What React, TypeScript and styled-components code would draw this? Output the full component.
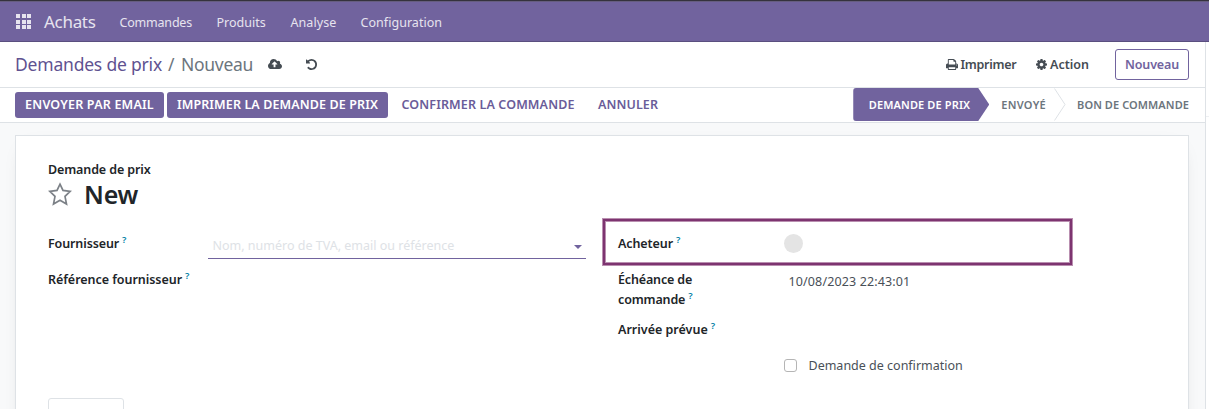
import React from "react";
import styled, { createGlobalStyle } from "styled-components";

const purple = "#71639e";

const GlobalStyle = createGlobalStyle`
  *, *::before, *::after { box-sizing: border-box; }
  body {
    margin: 0;
    overflow: hidden;
    background: #fff;
    color: #495057;
    font: 400 12.5px/20px "Noto Sans", "Open Sans", sans-serif;
  }
  button { font: inherit; color: inherit; border: 0; background: none; padding: 0; margin: 0; white-space: nowrap; }
`;

const Page = styled.div`
  height: 409px;
  display: flex;
  flex-direction: column;
  overflow: hidden;
`;

const Navbar = styled.nav`
  height: 42px;
  flex: none;
  display: flex;
  align-items: center;
  padding: 3px 0 0 16px;
  background: ${purple};
  border-top: 1px solid #35323d;
  border-bottom: 1px solid #5a4f7f;
  box-shadow: inset 0 1px 0 #665d80;
  color: #e7e4ef;
`;

const Apps = styled.div`
  display: grid;
  grid-template-columns: repeat(3, 4px);
  grid-auto-rows: 4px;
  gap: 1.5px;
  width: 15px;
  margin: 0 13px 2px 0;
  span { background: #e7e4ef; }
`;

const Brand = styled.span`
  width: 75.5px;
  padding-bottom: 2px;
  font-size: 17px;
  letter-spacing: -0.3px;
`;

const MenuItem = styled.a<{ $width: number; $track?: number }>`
  width: ${(p) => p.$width}px;
  letter-spacing: ${(p) => p.$track ?? 0}px;
  white-space: nowrap;
`;

const Columns = styled.div`
  flex: 1;
  min-height: 0;
  display: flex;
`;

const Main = styled.main`
  width: 1206px;
  display: flex;
  flex-direction: column;
  border-right: 1px solid #dee2e6;
`;

const Chatter = styled.aside`
  flex: 1;
  display: flex;
  flex-direction: column;
`;

const ChatterTop = styled.div`
  height: 75px;
  border-bottom: 1px solid #eef0f2;
`;

const ControlPanel = styled.header`
  height: 46px;
  flex: none;
  display: flex;
  align-items: center;
  padding: 0 16px 0 15px;
  border-bottom: 1px solid #dee2e6;
`;

const Breadcrumb = styled.div`
  display: flex;
  padding-bottom: 2px;
  font-size: 17.5px;
  line-height: 26px;
  white-space: nowrap;
  color: #6c757d;
`;

const Crumb = styled.span<{ $width: number; $link?: boolean; $track?: number }>`
  width: ${(p) => p.$width}px;
  letter-spacing: ${(p) => p.$track ?? 0}px;
  color: ${(p) => (p.$link ? "#5f5291" : "#6c757d")};
`;

const IconButton = styled.button<{ $width: number }>`
  width: ${(p) => p.$width}px;
  display: flex;
  align-items: center;
`;

const Spacer = styled.div`
  flex: 1;
`;

const PanelAction = styled.button<{ $width: number; $track?: number }>`
  width: ${(p) => p.$width}px;
  display: flex;
  align-items: center;
  gap: 3px;
  font-weight: 600;
  color: #454c53;
  letter-spacing: ${(p) => p.$track ?? 0}px;
`;

const OutlineButton = styled.button`
  width: 74px;
  height: 31px;
  border: 1px solid ${purple};
  border-radius: 3px;
  font-weight: 600;
  letter-spacing: -0.12px;
  color: ${purple};
`;

const StatusRow = styled.div`
  height: 35px;
  flex: none;
  display: flex;
  align-items: center;
  padding: 0 16px 0 15px;
  border-bottom: 1px solid #dee2e6;
`;

const StatusButton = styled.button<{ $width: number; $primary?: boolean; $track?: number }>`
  width: ${(p) => p.$width}px;
  height: 26px;
  margin-right: 3px;
  border-radius: 3px;
  font-weight: 600;
  text-align: center;
  letter-spacing: ${(p) => p.$track ?? 0}px;
  background: ${(p) => (p.$primary ? purple : "transparent")};
  color: ${(p) => (p.$primary ? "#fff" : "#6a5c99")};
`;

const Steps = styled.div`
  display: flex;
  align-self: flex-start;
  height: 33px;
  font-size: 11px;
  font-weight: 600;
  line-height: 33px;
  white-space: nowrap;
`;

const ActiveStep = styled.div`
  width: 136px;
  height: 33px;
  padding-left: 15.5px;
  border-radius: 3px;
  letter-spacing: 0.13px;
  color: #fff;
  background: ${purple};
  clip-path: polygon(0 0, 125px 0, 136px 50%, 125px 100%, 0 100%);
`;

const Step = styled.div<{ $track: number }>`
  letter-spacing: ${(p) => p.$track}px;
  color: #6c757d;
  margin-left: 12px;
`;

const Chevron = styled.svg`
  width: 12px;
  height: 33px;
  margin-left: 8px;
  margin-right: -1px;
`;

const Content = styled.div`
  flex: 1;
  min-height: 0;
  padding: 12px 16px 0 15px;
  background: #f8f9fa;
`;

const Sheet = styled.section`
  height: 320px;
  display: flex;
  flex-direction: column;
  padding: 24px 32px 0 32px;
  background: #fff;
  border: 1px solid #dee2e6;
  box-shadow: 0 5px 20px -15px rgba(0, 0, 0, 0.4);
`;

const Caption = styled.div`
  height: 20px;
  font-weight: 600;
  letter-spacing: -0.12px;
  color: #212529;
`;

const Title = styled.h1`
  height: 31px;
  margin: 0;
  padding-bottom: 3px;
  display: flex;
  align-items: center;
  gap: 12px;
  font-size: 25px;
  font-weight: 600;
  line-height: 28px;
  letter-spacing: -0.2px;
  color: #212529;
`;

const Groups = styled.div`
  display: grid;
  grid-template-columns: 538px 1fr;
  column-gap: 32px;
  height: 187px;
`;

const Group = styled.div`
  display: flex;
  flex-direction: column;
  padding-top: 23px;
`;

const Row = styled.div<{ $height: number; $label: number }>`
  height: ${(p) => p.$height}px;
  position: relative;
  display: grid;
  grid-template-columns: ${(p) => p.$label}px 1fr;
`;

const Label = styled.label<{ $track?: number }>`
  font-weight: 600;
  letter-spacing: ${(p) => p.$track ?? 0}px;
  color: #212529;
`;

const Help = styled.sup`
  margin-left: 3px;
  font-size: 9.5px;
  font-weight: 600;
  line-height: 0;
  vertical-align: 5px;
  letter-spacing: 0;
  color: #0180a5;
`;

const Combo = styled.div`
  width: 378px;
  height: 25px;
  display: flex;
  align-items: center;
  justify-content: space-between;
  padding: 0 4px 1px 4.5px;
  border-bottom: 1px solid ${purple};
  color: #dee2e6;
`;

const Caret = styled.span`
  margin-top: 2px;
  border: 4px solid transparent;
  border-top-color: ${purple};
  border-bottom: 0;
`;

const Avatar = styled.span`
  width: 19px;
  height: 19px;
  border-radius: 50%;
  background: #e4e4e4;
`;

const Value = styled.div`
  padding: 2px 0 0 4.5px;
  letter-spacing: 0.13px;
`;

const CheckField = styled.div`
  display: flex;
  align-items: flex-start;
  gap: 11.5px;
`;

const CheckBox = styled.span`
  width: 13px;
  height: 13px;
  margin-top: 3px;
  border: 1px solid #b5b5b5;
  border-radius: 3px;
`;

const Highlight = styled.div`
  position: absolute;
  left: -16px;
  top: -16px;
  width: 471px;
  height: 48px;
  border: 4px solid #b98fb0;
  &::after {
    content: "";
    position: absolute;
    inset: -3px;
    border: 2px solid #7d3470;
  }
`;

const Tab = styled.div`
  width: 76px;
  height: 30px;
  flex: none;
  border: 1px solid #dee2e6;
  border-radius: 3px 3px 0 0;
`;

const glyphs = {
  upload: "M1280 864q0-14-9-23l-352-352q-9-9-23-9t-23 9l-351 351q-10 12-10 24 0 14 9 23t23 9h224v352q0 13 9.5 22.5t22.5 9.5h192q13 0 22.5-9.5t9.5-22.5v-352h224q13 0 22.5-9.5t9.5-22.5zm640 288q0 159-112.5 271.5t-271.5 112.5h-1088q-185 0-316.5-131.5t-131.5-316.5q0-130 70-240t188-165q-2-30-2-43 0-212 150-362t362-150q156 0 285.5 87t188.5 231q71-62 166-62 106 0 181 75t75 181q0 76-41 138 130 31 213.5 135.5t83.5 238.5z",
  undo: "M1664 896q0 156-61 298t-164 245-245 164-298 61q-172 0-327-72.5t-264-204.5q-7-10-6.5-22.5t8.5-20.5l137-138q10-9 25-9 16 2 23 12 73 95 179 147t225 52q104 0 198.5-40.5t163.5-109.5 109.5-163.5 40.5-198.5-40.5-198.5-109.5-163.5-163.5-109.5-198.5-40.5q-98 0-188 35.5t-160 101.5l137 138q31 30 14 69-17 40-59 40h-448q-26 0-45-19t-19-45v-448q0-42 40-59 39-17 69 14l130 129q107-101 244.5-156.5t284.5-55.5q156 0 298 61t245 164 164 245 61 298z",
  print: "M448 1536h896v-256h-896v256zm0-640h896v-384h-160q-40 0-68-28t-28-68v-160h-640v640zm1152 64q0-26-19-45t-45-19-45 19-19 45 19 45 45 19 45-19 19-45zm128 0v416q0 13-9.5 22.5t-22.5 9.5h-224v160q0 40-28 68t-68 28h-960q-40 0-68-28t-28-68v-160h-224q-13 0-22.5-9.5t-9.5-22.5v-416q0-79 56.5-135.5t135.5-56.5h64v-544q0-40 28-68t68-28h672q40 0 88 20t76 48l152 152q28 28 48 76t20 88v256h64q79 0 135.5 56.5t56.5 135.5z",
  cog: "M1152 896q0-106-75-181t-181-75-181 75-75 181 75 181 181 75 181-75 75-181zm512-109v222q0 12-8 23t-20 13l-185 28q-19 54-39 91 35 50 107 138 10 12 10 25t-9 23q-27 37-99 108t-94 71q-12 0-26-9l-138-108q-44 23-91 38-16 136-29 186-7 28-36 28h-222q-14 0-24.5-8.5t-11.5-21.5l-28-184q-49-16-90-37l-141 107q-10 9-25 9-14 0-25-11-126-114-165-168-7-10-7-23 0-12 8-23 15-21 51-66.5t54-70.5q-27-50-41-99l-183-27q-13-2-21-12.5t-8-23.5v-222q0-12 8-23t19-13l186-28q14-46 39-92-40-57-107-138-10-12-10-24 0-10 9-23 26-36 98.5-107.5t94.5-71.5q13 0 26 10l138 107q44-23 91-38 16-136 29-186 7-28 36-28h222q14 0 24.5 8.5t11.5 21.5l28 184q49 16 90 37l142-107q9-9 24-9 13 0 25 10 129 119 165 170 7 8 7 22 0 12-8 23-15 21-51 66.5t-54 70.5q26 50 41 98l183 28q13 2 21 12.5t8 23.5z",
};

const boxes = {
  upload: "0 128 1920 1536",
  undo: "128 128 1536 1536",
  print: "64 128 1664 1536",
  cog: "128 128 1536 1536",
};

function Glyph({ name, w, h }: { name: keyof typeof glyphs; w: number; h: number }) {
  return (
    <svg width={w} height={h} viewBox={boxes[name]} preserveAspectRatio="none" fill="#454c53" aria-hidden="true">
      <path d={glyphs[name]} />
    </svg>
  );
}

function Star() {
  return (
    <svg width="24" height="24" viewBox="0 0 24 24" fill="none" stroke="#7c8187" strokeWidth="1.7" aria-hidden="true">
      <path d="M12 2.2L15 8.4L22.2 9.3L17 14.3L18.5 22L12 18.2L5.5 22L7 14.3L1.8 9.3L9 8.4Z" />
    </svg>
  );
}

export default function App() {
  return (
    <Page>
      <GlobalStyle />
      <Navbar>
        <Apps>
          {Array.from({ length: 9 }, (_, i) => (
            <span key={i} />
          ))}
        </Apps>
        <Brand>Achats</Brand>
        <MenuItem $width={97} $track={-0.2}>Commandes</MenuItem>
        <MenuItem $width={74}>Produits</MenuItem>
        <MenuItem $width={70} $track={0.08}>Analyse</MenuItem>
        <MenuItem $width={90} $track={0.04}>Configuration</MenuItem>
      </Navbar>
      <Columns>
        <Main>
          <ControlPanel>
            <Breadcrumb>
              <Crumb $width={153} $link $track={-0.2}>Demandes de prix</Crumb>
              <Crumb $width={13}>/</Crumb>
              <Crumb $width={87} $track={-0.28}>Nouveau</Crumb>
            </Breadcrumb>
            <IconButton $width={38} aria-label="Enregistrer">
              <Glyph name="upload" w={14} h={11} />
            </IconButton>
            <IconButton $width={14} aria-label="Annuler">
              <Glyph name="undo" w={11} h={11} />
            </IconButton>
            <Spacer />
            <PanelAction $width={90.5} $track={-0.28}>
              <Glyph name="print" w={12} h={11} />
              Imprimer
            </PanelAction>
            <PanelAction $width={79}>
              <Glyph name="cog" w={11} h={11} />
              Action
            </PanelAction>
            <OutlineButton>Nouveau</OutlineButton>
          </ControlPanel>
          <StatusRow>
            <StatusButton $primary $width={149} $track={0.2}>ENVOYER PAR EMAIL</StatusButton>
            <StatusButton $primary $width={221} $track={0.11}>IMPRIMER LA DEMANDE DE PRIX</StatusButton>
            <StatusButton $width={194} $track={0.13}>CONFIRMER LA COMMANDE</StatusButton>
            <StatusButton $width={80} $track={0.1}>ANNULER</StatusButton>
            <Spacer />
            <Steps>
              <ActiveStep>DEMANDE DE PRIX</ActiveStep>
              <Step $track={0.3}>ENVOYÉ</Step>
              <Chevron viewBox="0 0 12 33" fill="none" stroke="#dee2e6">
                <path d="M0.5 0.5L11 16.5L0.5 32.5" />
              </Chevron>
              <Step $track={0.08}>BON DE COMMANDE</Step>
            </Steps>
          </StatusRow>
          <Content>
            <Sheet>
              <Caption>Demande de prix</Caption>
              <Title>
                <Star />
                New
              </Title>
              <Groups>
                <Group>
                  <Row $height={36} $label={160}>
                    <Label $track={-0.12}>Fournisseur<Help>?</Help></Label>
                    <Combo>
                      Nom, numéro de TVA, email ou référence
                      <Caret />
                    </Combo>
                  </Row>
                  <Row $height={36} $label={160}>
                    <Label $track={-0.04}>Référence fournisseur<Help>?</Help></Label>
                  </Row>
                </Group>
                <Group>
                  <Row $height={36} $label={166}>
                    <Label $track={-0.1}>Acheteur<Help>?</Help></Label>
                    <Avatar />
                    <Highlight />
                  </Row>
                  <Row $height={50} $label={166}>
                    <Label $track={-0.15}>Échéance de<br />commande<Help>?</Help></Label>
                    <Value>10/08/2023 22:43:01</Value>
                  </Row>
                  <Row $height={36} $label={166}>
                    <Label>Arrivée prévue<Help>?</Help></Label>
                  </Row>
                  <Row $height={20} $label={166}>
                    <span />
                    <CheckField>
                      <CheckBox />
                      Demande de confirmation
                    </CheckField>
                  </Row>
                </Group>
              </Groups>
              <Tab />
            </Sheet>
          </Content>
        </Main>
        <Chatter>
          <ChatterTop />
        </Chatter>
      </Columns>
    </Page>
  );
}
